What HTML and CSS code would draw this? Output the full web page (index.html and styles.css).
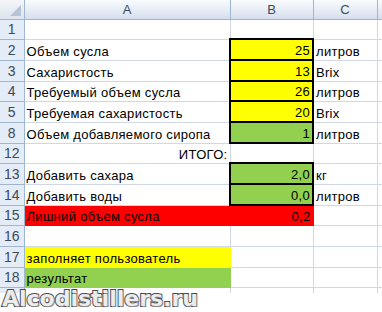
FILE: index.html
```html
<!DOCTYPE html>
<html lang="ru">
<head>
    <meta charset="UTF-8">
    <title>Калькулятор сиропа</title>
    <link rel="stylesheet" href="styles.css">
</head>
<body>

<div class="sheet">
    <table class="grid">
        <colgroup>
            <col class="c-num">
            <col class="c-a">
            <col class="c-b">
            <col class="c-c">
            <col class="c-d">
        </colgroup>
        <thead>
            <tr class="r0">
                <th class="corner"><span class="tri"></span></th>
                <th class="col">A</th>
                <th class="col">B</th>
                <th class="col">C</th>
                <th class="col"></th>
            </tr>
        </thead>
        <tbody>
            <tr class="r20"><th>1</th><td></td><td></td><td></td><td></td></tr>
            <tr class="r21"><th>2</th><td>Объем сусла</td><td class="in num">25</td><td>литров</td><td></td></tr>
            <tr class="r21"><th>3</th><td>Сахаристость</td><td class="in num">13</td><td>Brix</td><td></td></tr>
            <tr class="r20"><th>4</th><td>Требуемый объем сусла</td><td class="in num">26</td><td>литров</td><td></td></tr>
            <tr class="r21"><th>5</th><td>Требуемая сахаристость</td><td class="in num">20</td><td>Brix</td><td></td></tr>
            <tr class="r21"><th>8</th><td>Объем добавляемого сиропа</td><td class="out num">1</td><td>литров</td><td></td></tr>
            <tr class="r20"><th>12</th><td class="num">ИТОГО:</td><td></td><td></td><td></td></tr>
            <tr class="r21"><th>13</th><td>Добавить сахара</td><td class="out num">2,0</td><td>кг</td><td></td></tr>
            <tr class="r21"><th>14</th><td>Добавить воды</td><td class="out num">0,0</td><td>литров</td><td></td></tr>
            <tr class="r20"><th>15</th><td class="warn">Лишний объем сусла</td><td class="warn num">0,2</td><td></td><td></td></tr>
            <tr class="r21"><th>16</th><td></td><td></td><td></td><td></td></tr>
            <tr class="r21"><th>17</th><td class="key-in">заполняет пользователь</td><td></td><td></td><td></td></tr>
            <tr class="r20"><th>18</th><td class="key-out">результат</td><td></td><td></td><td></td></tr>
            <tr class="r21"><th></th><td></td><td></td><td></td><td></td></tr>
        </tbody>
    </table>

    <div class="watermark">Alcodistillers.ru</div>
</div>

</body>
</html>
```

FILE: styles.css
```css
body {
    margin: 0;
    background: #fff;
    overflow: hidden;
}
.sheet {
    position: relative;
    width: 382px;
    height: 312px;
    overflow: hidden;
}
.grid {
    table-layout: fixed;
    border-collapse: collapse;
    width: 387px;
    font-family: "Liberation Sans", Arial, sans-serif;
    font-size: 13px;
    letter-spacing: 0.3px;
    color: #000;
}
.c-num { width: 24px; }
.c-a { width: 206px; }
.c-b { width: 83px; }
.c-c { width: 64px; }
.c-d { width: 10px; }

.grid td, .grid th {
    border: 1px solid #d0d7e5;
    padding: 0 2px 1px 2px;
    vertical-align: bottom;
    white-space: nowrap;
    overflow: hidden;
    text-align: left;
    font-weight: normal;
}
.r0 { height: 19px; }
.r20 { height: 20px; }
.r21 { height: 21px; }

/* column and row headers */
.grid th.col {
    background: linear-gradient(#f9fbfd, #e4eaf4 60%, #d5deec);
    border-color: #9eb6ce;
    border-top: none;
    color: #3b4a5c;
    text-align: center;
    vertical-align: middle;
    padding: 0;
    letter-spacing: 0;
}
.grid tbody th {
    background: #e4ecf7;
    border-color: #9eb6ce;
    border-left: none;
    color: #3b4a5c;
    text-align: center;
    vertical-align: middle;
    padding: 0;
    font-size: 14px;
    letter-spacing: 0;
}
.grid th.corner {
    position: relative;
    background: linear-gradient(#f4f6f9, #dde4ee);
    border-color: #9eb6ce;
    border-top: none;
    border-left: none;
    padding: 0;
}
.tri {
    position: absolute;
    right: 3px;
    bottom: 3px;
    width: 0;
    height: 0;
    border-left: 11px solid transparent;
    border-bottom: 11px solid #b7c4d6;
}

.num { text-align: right !important; }

.grid td.in {
    background: #ffff00;
    border: 2px solid #000;
}
.grid td.out {
    background: #92d050;
    border: 2px solid #000;
}
.grid td.warn {
    background: #ff0000;
    border-color: #ff0000;
}
.grid td.key-in {
    background: #ffff00;
    border-color: #ffff00;
}
.grid td.key-out {
    background: #92d050;
    border-color: #92d050;
}

/* site stamp over the bottom of the sheet */
.watermark {
    position: absolute;
    left: 0;
    right: 0;
    top: 289px;
    bottom: 0;
    padding-left: 2px;
    background: linear-gradient(transparent 4px, #fff 4px);
    font-family: "DejaVu Sans", Verdana, sans-serif;
    font-weight: bold;
    font-size: 22px;
    line-height: 20px;
    color: #ececec;
    -webkit-text-stroke: 2px #4a4a4a;
    paint-order: stroke fill;
    text-shadow: 1px 1px 0 #8a8a8a;
    white-space: nowrap;
}
```
